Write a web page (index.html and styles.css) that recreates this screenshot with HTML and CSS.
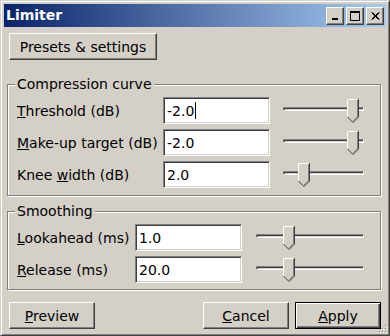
FILE: index.html
```html
<!DOCTYPE html>
<html lang="en">
<head>
    <meta charset="UTF-8">
    <meta name="viewport" content="width=device-width, initial-scale=1.0">
    <title>Limiter</title>
    <link rel="stylesheet" href="styles.css">
</head>
<body>

<div class="window">
    <div class="titlebar">
        <span class="title">Limiter</span>
        <div class="caption-buttons">
            <span class="cap-btn">
                <svg width="8" height="8" viewBox="0 0 8 8"><rect x="1" y="6" width="6" height="2" fill="#000"/></svg>
            </span>
            <span class="cap-btn">
                <svg width="10" height="10" viewBox="0 0 10 10"><path d="M0.5 1.5H9.5V9.5H0.5Z M0 0.5H10" stroke="#000" fill="none"/></svg>
            </span>
            <span class="cap-btn close">
                <svg width="9" height="8" viewBox="0 0 9 8"><path d="M0.5 0.5L7.5 7.5M1.5 0.5L8.5 7.5M7.5 0.5L0.5 7.5M8.5 0.5L1.5 7.5" stroke="#000" fill="none"/></svg>
            </span>
        </div>
    </div>

    <div class="client">
        <button class="btn presets">Presets &amp; settings</button>

        <fieldset class="group">
            <legend>Compression curve</legend>
            <div class="rows compression">
                <span class="label"><u>T</u>hreshold (dB)</span>
                <div class="field">-2.0<span class="caret"></span></div>
                <div class="slider"><div class="track"></div><span class="thumb" style="left:64px"></span></div>

                <span class="label"><u>M</u>ake-up target (dB)</span>
                <div class="field">-2.0</div>
                <div class="slider"><div class="track"></div><span class="thumb" style="left:64px"></span></div>

                <span class="label">Knee <u>w</u>idth (dB)</span>
                <div class="field">2.0</div>
                <div class="slider"><div class="track"></div><span class="thumb" style="left:15px"></span></div>
            </div>
        </fieldset>

        <fieldset class="group smoothing-group">
            <legend>Smoothing</legend>
            <div class="rows smoothing">
                <span class="label"><u>L</u>ookahead (ms)</span>
                <div class="field">1.0</div>
                <div class="slider"><div class="track"></div><span class="thumb" style="left:27px"></span></div>

                <span class="label"><u>R</u>elease (ms)</span>
                <div class="field">20.0</div>
                <div class="slider"><div class="track"></div><span class="thumb" style="left:27px"></span></div>
            </div>
        </fieldset>

        <div class="footer">
            <button class="btn preview"><u>P</u>review</button>
            <button class="btn"><u>C</u>ancel</button>
            <button class="btn default"><u>A</u>pply</button>
        </div>
    </div>

    <svg class="grip" width="8" height="8" viewBox="0 0 8 8">
        <rect x="6" y="0" width="1" height="1" fill="#808080"/>
        <rect x="3" y="3" width="1" height="1" fill="#808080"/>
        <rect x="6" y="3" width="1" height="1" fill="#808080"/>
        <rect x="0" y="6" width="1" height="1" fill="#808080"/>
        <rect x="3" y="6" width="1" height="1" fill="#808080"/>
        <rect x="6" y="6" width="1" height="1" fill="#808080"/>
        <rect x="7" y="1" width="1" height="1" fill="#fff"/>
        <rect x="4" y="4" width="1" height="1" fill="#fff"/>
        <rect x="7" y="4" width="1" height="1" fill="#fff"/>
        <rect x="1" y="7" width="1" height="1" fill="#fff"/>
        <rect x="4" y="7" width="1" height="1" fill="#fff"/>
        <rect x="7" y="7" width="1" height="1" fill="#fff"/>
    </svg>
</div>

</body>
</html>
```

FILE: styles.css
```css
/* Classic dialog look */
body {
    margin: 0;
    background-color: #d4d0c8;
    font-family: "DejaVu Sans", sans-serif;
    font-size: 14px;
    color: #000;
    overflow: hidden;
}

.window {
    position: relative;
    width: 390px;
    height: 336px;
    box-sizing: border-box;
    padding: 3px;
    background-color: #d4d0c8;
    border: 1px solid;
    border-color: #d4d0c8 #404040 #404040 #d4d0c8;
    box-shadow: inset 1px 1px 0 #fff, inset -1px -1px 0 #808080;
}

/* Title bar */
.titlebar {
    height: 23px;
    display: flex;
    align-items: center;
    justify-content: space-between;
    padding: 0 2px;
    background: linear-gradient(to right, #0a246a, #a6caf0);
}

.title {
    color: white;
    font-weight: bold;
    font-size: 14px;
    line-height: 17px;
}

.caption-buttons {
    display: flex;
    gap: 2px;
}

.cap-btn {
    width: 18px;
    height: 18px;
    box-sizing: border-box;
    display: flex;
    align-items: center;
    justify-content: center;
    background-color: #d4d0c8;
    border: 1px solid;
    border-color: #fff #404040 #404040 #fff;
    box-shadow: inset -1px -1px 0 #808080;
}

/* Client area */
.client {
    padding: 6px 5px 0 3px;
}

.btn {
    display: block;
    height: 27px;
    box-sizing: border-box;
    padding: 0;
    font-family: "DejaVu Sans", sans-serif;
    font-size: 14px;
    color: #000;
    background-color: #d4d0c8;
    border: 1px solid;
    border-color: #fff #404040 #404040 #fff;
    box-shadow: inset -1px -1px 0 #808080;
}

.btn.default {
    border: 1px solid #000;
    box-shadow: inset 1px 1px 0 #fff, inset -1px -1px 0 #404040, inset -2px -2px 0 #808080;
}

.presets {
    width: 148px;
    margin-left: 2px;
}

/* Group boxes */
.group {
    margin: 16px 0 0 0;
    padding: 4px 16px 7px 9px;
    min-width: 0;
    border: 1px solid #808080;
    box-shadow: 1px 1px 0 #fff, inset 1px 1px 0 #fff;
}

.group legend {
    padding: 0 2px;
    margin-left: -2px;
    line-height: 17px;
    background-color: #d4d0c8;
}

.smoothing-group {
    margin-top: 7px;
    padding-bottom: 6px;
}

.rows {
    display: grid;
    grid-auto-rows: 27px;
    row-gap: 5px;
    align-items: center;
}

.compression {
    grid-template-columns: 146px 107px 1fr;
}

.smoothing {
    grid-template-columns: 118px 107px 1fr;
}

.label {
    white-space: nowrap;
}

.field {
    height: 27px;
    box-sizing: border-box;
    padding-left: 3px;
    display: flex;
    align-items: center;
    background: white;
    border: 1px solid;
    border-color: #808080 #fff #fff #808080;
    box-shadow: inset 1px 1px 0 #404040, inset -1px -1px 0 #d4d0c8;
}

.caret {
    width: 1px;
    height: 17px;
    margin-left: 1px;
    background: #000;
}

/* Trackbars */
.slider {
    position: relative;
    height: 27px;
    padding-top: 10px;
    box-sizing: border-box;
}

.compression .slider {
    margin-left: 13px;
}

.smoothing .slider {
    margin-left: 14px;
}

.track {
    height: 4px;
    box-sizing: border-box;
    border: 1px solid;
    border-color: #808080 #fff #fff #808080;
    box-shadow: inset 1px 1px 0 #404040;
}

.thumb {
    position: absolute;
    top: 2px;
    width: 12px;
    height: 24px;
    background: url("data:image/svg+xml,%3Csvg xmlns='http://www.w3.org/2000/svg' width='12' height='24'%3E%3Cpolygon points='0,0 12,0 12,18 6,24 0,18' fill='%23d4d0c8'/%3E%3Cpath d='M0.5 18V0.5H11' stroke='%23fff' fill='none'/%3E%3Cpath d='M11.5 0V18L6 23.5L0.5 18' stroke='%23404040' fill='none'/%3E%3Cpath d='M10.5 1V17.6L6 22.1' stroke='%23808080' fill='none'/%3E%3C/svg%3E") no-repeat;
}

/* Bottom buttons */
.footer {
    display: flex;
    gap: 6px;
    margin-top: 12px;
}

.footer .btn {
    width: 86px;
}

.footer .preview {
    margin-left: 2px;
    margin-right: auto;
}

.grip {
    position: absolute;
    right: 2px;
    bottom: 2px;
}
```
